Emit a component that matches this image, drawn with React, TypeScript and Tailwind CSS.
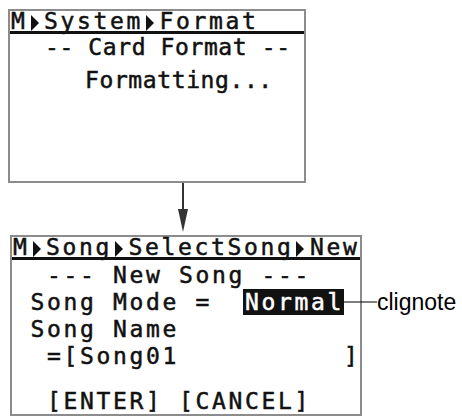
import React from "react";

const lcd = "font-['DejaVu_Sans_Mono',monospace] font-normal text-[23px] tracking-[2.65px] whitespace-pre text-[#111] [-webkit-text-stroke:0.5px_currentColor]";
const lcdNarrow = "font-['DejaVu_Sans_Mono',monospace] font-normal text-[23px] tracking-[0.6px] whitespace-pre text-[#111] [-webkit-text-stroke:0.5px_currentColor]";

function Tri() {
  return (
    <span className="inline-block w-[16.5px] align-baseline">
      <svg width="10" height="16" viewBox="0 0 10 16" className="inline-block ml-[2px]">
        <path d="M1 0 L9 8 L1 16 Z" fill="#111" />
      </svg>
    </span>
  );
}

export default function App() {
  return (
    <div className="w-[462px] h-[418px] bg-white overflow-hidden">
      <div className="pt-[9px] pl-[8px]">
        {/* top screen */}
        <div className="w-[298px] h-[174px] border-2 border-[#8c8c8c] flex flex-col">
          <div className={`${lcd} leading-[20px] border-b-[3px] border-[#111] pl-[1px]`}>
            M<Tri />System<Tri />Format
          </div>
          <div className={`${lcdNarrow} leading-[27px] pl-[35px]`}>-- Card Format --</div>
          <div className={`${lcdNarrow} leading-[27px] pl-[75px] mt-[6px]`}>Formatting...</div>
        </div>

        {/* arrow */}
        <div className="h-[52px] pl-[168px]">
          <svg width="20" height="52" viewBox="0 0 20 52">
            <line x1="7" y1="0" x2="7" y2="30" stroke="#333" strokeWidth="2" />
            <path d="M2 26 L12 26 L7 49 Z" fill="#333" />
          </svg>
        </div>

        {/* bottom screen */}
        <div className="ml-[2px] w-[352px] h-[181px] border-2 border-[#8c8c8c] flex flex-col">
          <div className={`${lcd} leading-[20px] border-b-[3px] border-[#111] pl-[1px]`}>
            M<Tri />Song<Tri />SelectSong<Tri />New
          </div>
          <div className={`${lcd} leading-[27px] pl-[2px] mt-[2px]`}>{"  --- New Song ---"}</div>
          <div className={`${lcd} leading-[27px] pl-[2px]`}>
            {" Song Mode =  "}
            <span className="relative -ml-[2px] bg-[#111] text-white pl-[2px]">
              Normal
              <span className="absolute left-full top-1/2 flex items-center -translate-y-1/2">
                <span className="w-[33px] h-[1.5px] bg-black" />
                <span className="font-['Liberation_Sans',Arial,sans-serif] font-normal tracking-normal text-[23px] text-black leading-none [-webkit-text-stroke:0px]">clignote</span>
              </span>
            </span>
          </div>
          <div className={`${lcd} leading-[27px] pl-[2px]`}>{" Song Name"}</div>
          <div className={`${lcd} leading-[27px] pl-[2px]`}>{"  =[Song01          ]"}</div>
          <div className={`${lcd} leading-[27px] pl-[2px] mt-[18px]`}>{"  [ENTER] [CANCEL]"}</div>
        </div>
      </div>
    </div>
  );
}
